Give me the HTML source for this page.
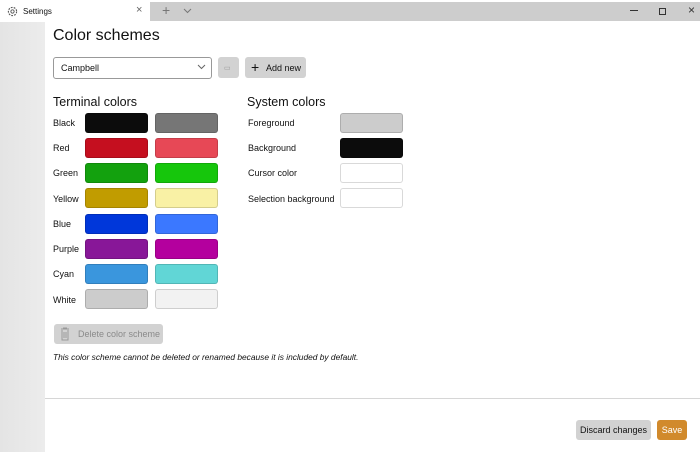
<!DOCTYPE html><html><head><style>
body{margin:0;width:700px;height:452px;position:relative;background:#fff;font-family:"Liberation Sans",sans-serif;overflow:hidden;color:#111}
.a{position:absolute}
.sw{position:absolute;width:61px;height:18px;border-radius:3px;border:1px solid rgba(0,0,0,.15)}
.l{position:absolute;font-size:9px;left:53px}
.r{position:absolute;font-size:9px;left:248px}
</style></head><body>
<div class="a" style="left:150px;top:2px;width:550px;height:19px;background:#cdcdcd"></div>
<div class="a" style="left:0;top:2px;width:150px;height:20px;background:#fff"></div>
<svg class="a" style="left:7px;top:6px" width="11" height="11" viewBox="0 0 12 12"><circle cx="6" cy="6" r="4.5" fill="none" stroke="#555" stroke-width="1.2" stroke-dasharray="2 1.2"/><circle cx="6" cy="6" r="1.8" fill="none" stroke="#555"/></svg>
<div class="a" style="left:23px;top:7px;font-size:8px">Settings</div>
<div class="a" style="left:136px;top:4px;font-size:11px;color:#666">×</div>
<div class="a" style="left:162px;top:2px;font-size:14px;color:#777">+</div>
<svg class="a" style="left:183px;top:8px" width="9" height="6" viewBox="0 0 9 6"><path d="M1 1l3.5 3.5L8 1" fill="none" stroke="#777"/></svg>
<div class="a" style="left:630px;top:10px;width:8px;height:1px;background:#333"></div>
<div class="a" style="left:659px;top:8px;width:5px;height:5px;border:1px solid #333"></div>
<div class="a" style="left:688px;top:3px;font-size:12px;color:#333">×</div>
<div class="a" style="left:0;top:22px;width:45px;height:430px;background:linear-gradient(90deg,#e4e4e4,#ececec)"></div>
<div class="a" style="left:53px;top:27px;font-size:16px">Color schemes</div>
<div class="a" style="left:53px;top:57px;width:157px;height:20px;border:1px solid #999;border-radius:3px"></div>
<div class="a" style="left:61px;top:63px;font-size:9px">Campbell</div>
<svg class="a" style="left:197px;top:64px" width="9" height="6" viewBox="0 0 9 6"><path d="M1 1l3.5 3.5L8 1" fill="none" stroke="#666"/></svg>
<div class="a" style="left:218px;top:57px;width:21px;height:21px;background:#d2d2d2;border-radius:3px"></div>
<div class="a" style="left:224px;top:64px;font-size:7px;color:#999">▭</div>
<div class="a" style="left:245px;top:57px;width:61px;height:21px;background:#d2d2d2;border-radius:3px"></div>
<div class="a" style="left:251px;top:59px;font-size:14px">+</div>
<div class="a" style="left:266px;top:63px;font-size:9px">Add new</div>
<div class="a" style="left:53px;top:95px;font-size:12.5px">Terminal colors</div>
<div class="a" style="left:247px;top:95px;font-size:12.5px">System colors</div>
<div class="l" style="top:118px">Black</div><div class="sw" style="left:85px;top:113px;background:#0c0c0c"></div><div class="sw" style="left:155px;top:113px;background:#767676"></div>
<div class="l" style="top:143px">Red</div><div class="sw" style="left:85px;top:138px;background:#c50f1f"></div><div class="sw" style="left:155px;top:138px;background:#e74856"></div>
<div class="l" style="top:168px">Green</div><div class="sw" style="left:85px;top:163px;background:#13a10e"></div><div class="sw" style="left:155px;top:163px;background:#16c60c"></div>
<div class="l" style="top:194px">Yellow</div><div class="sw" style="left:85px;top:188px;background:#c19c00"></div><div class="sw" style="left:155px;top:188px;background:#f9f1a5"></div>
<div class="l" style="top:219px">Blue</div><div class="sw" style="left:85px;top:214px;background:#0037da"></div><div class="sw" style="left:155px;top:214px;background:#3b78ff"></div>
<div class="l" style="top:244px">Purple</div><div class="sw" style="left:85px;top:239px;background:#881798"></div><div class="sw" style="left:155px;top:239px;background:#b4009e"></div>
<div class="l" style="top:269px">Cyan</div><div class="sw" style="left:85px;top:264px;background:#3a96dd"></div><div class="sw" style="left:155px;top:264px;background:#61d6d6"></div>
<div class="l" style="top:295px">White</div><div class="sw" style="left:85px;top:289px;background:#cccccc"></div><div class="sw" style="left:155px;top:289px;background:#f2f2f2"></div>
<div class="r" style="top:118px">Foreground</div><div class="sw" style="left:340px;top:113px;background:#cccccc"></div>
<div class="r" style="top:143px">Background</div><div class="sw" style="left:340px;top:138px;background:#0c0c0c"></div>
<div class="r" style="top:168px">Cursor color</div><div class="sw" style="left:340px;top:163px;background:#fff"></div>
<div class="r" style="top:194px">Selection background</div><div class="sw" style="left:340px;top:188px;background:#fff"></div>
<div class="a" style="left:54px;top:324px;width:109px;height:20px;background:#d2d2d2;border-radius:3px"></div>
<svg class="a" style="left:60px;top:327px" width="10" height="14" viewBox="0 0 10 14"><path d="M1 2h8M3.5 2V1h3v1M2 3v10h6V3M4 5v6M6 5v6" fill="none" stroke="#999"/></svg>
<div class="a" style="left:78px;top:329px;font-size:9px;color:#8a8a8a">Delete color scheme</div>
<div class="a" style="left:53px;top:352px;font-size:8.4px;font-style:italic">This color scheme cannot be deleted or renamed because it is included by default.</div>
<div class="a" style="left:45px;top:398px;width:655px;height:1px;background:#d6d6d6"></div>
<div class="a" style="left:576px;top:420px;width:75px;height:20px;background:#d2d2d2;border-radius:3px;font-size:9px;text-align:center;line-height:20px">Discard changes</div>
<div class="a" style="left:657px;top:420px;width:30px;height:20px;background:#d18a2c;border-radius:3px;font-size:9px;color:#fff;text-align:center;line-height:20px">Save</div>
</body></html>
